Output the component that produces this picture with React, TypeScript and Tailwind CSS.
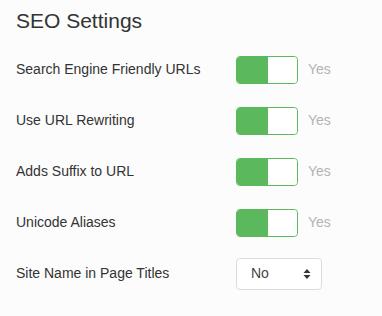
import { ChevronsUpDown } from 'lucide-react';

const toggles = [
    'Search Engine Friendly URLs',
    'Use URL Rewriting',
    'Adds Suffix to URL',
    'Unicode Aliases',
];

function Toggle() {
    return (
        <div className="flex items-center gap-[10px]">
            <div className="flex w-[62px] h-[28px] rounded-[4px] border border-[#5cb85c] bg-white overflow-hidden">
                <span className="w-[31px] h-full bg-[#5cb85c]" />
                <span className="flex-1 h-full bg-white rounded-[3px]" />
            </div>
            <span className="text-[14px] text-[#b3b3b3]">Yes</span>
        </div>
    );
}

export default function App() {
    return (
        <div className="w-[382px] h-[316px] bg-[#fcfcfc] px-4 pt-[6px] text-[#333] font-['Liberation_Sans',Arial,sans-serif]">
            <h2 className="text-[21px] leading-[30px] text-[#333]">SEO Settings</h2>

            <div className="mt-[8px]">
                {toggles.map((label) => (
                    <div key={label} className="grid grid-cols-[220px_1fr] items-center h-[51px]">
                        <span className="text-[14px]">{label}</span>
                        <Toggle />
                    </div>
                ))}
                <div className="grid grid-cols-[220px_1fr] items-center h-[51px]">
                    <span className="text-[14px]">Site Name in Page Titles</span>
                    <div className="flex items-center justify-between w-[86px] h-[32px] pl-[14px] pr-[10px] rounded-[4px] border border-[#dcdcdc] bg-white">
                        <span className="text-[14px] text-[#444]">No</span>
                        <svg width="8" height="12" viewBox="0 0 8 12" className="text-[#333]">
                            <path d="M4 1 L7.5 5 H0.5 Z" fill="currentColor" />
                            <path d="M4 11 L7.5 7 H0.5 Z" fill="currentColor" />
                        </svg>
                    </div>
                </div>
            </div>
        </div>
    );
}
